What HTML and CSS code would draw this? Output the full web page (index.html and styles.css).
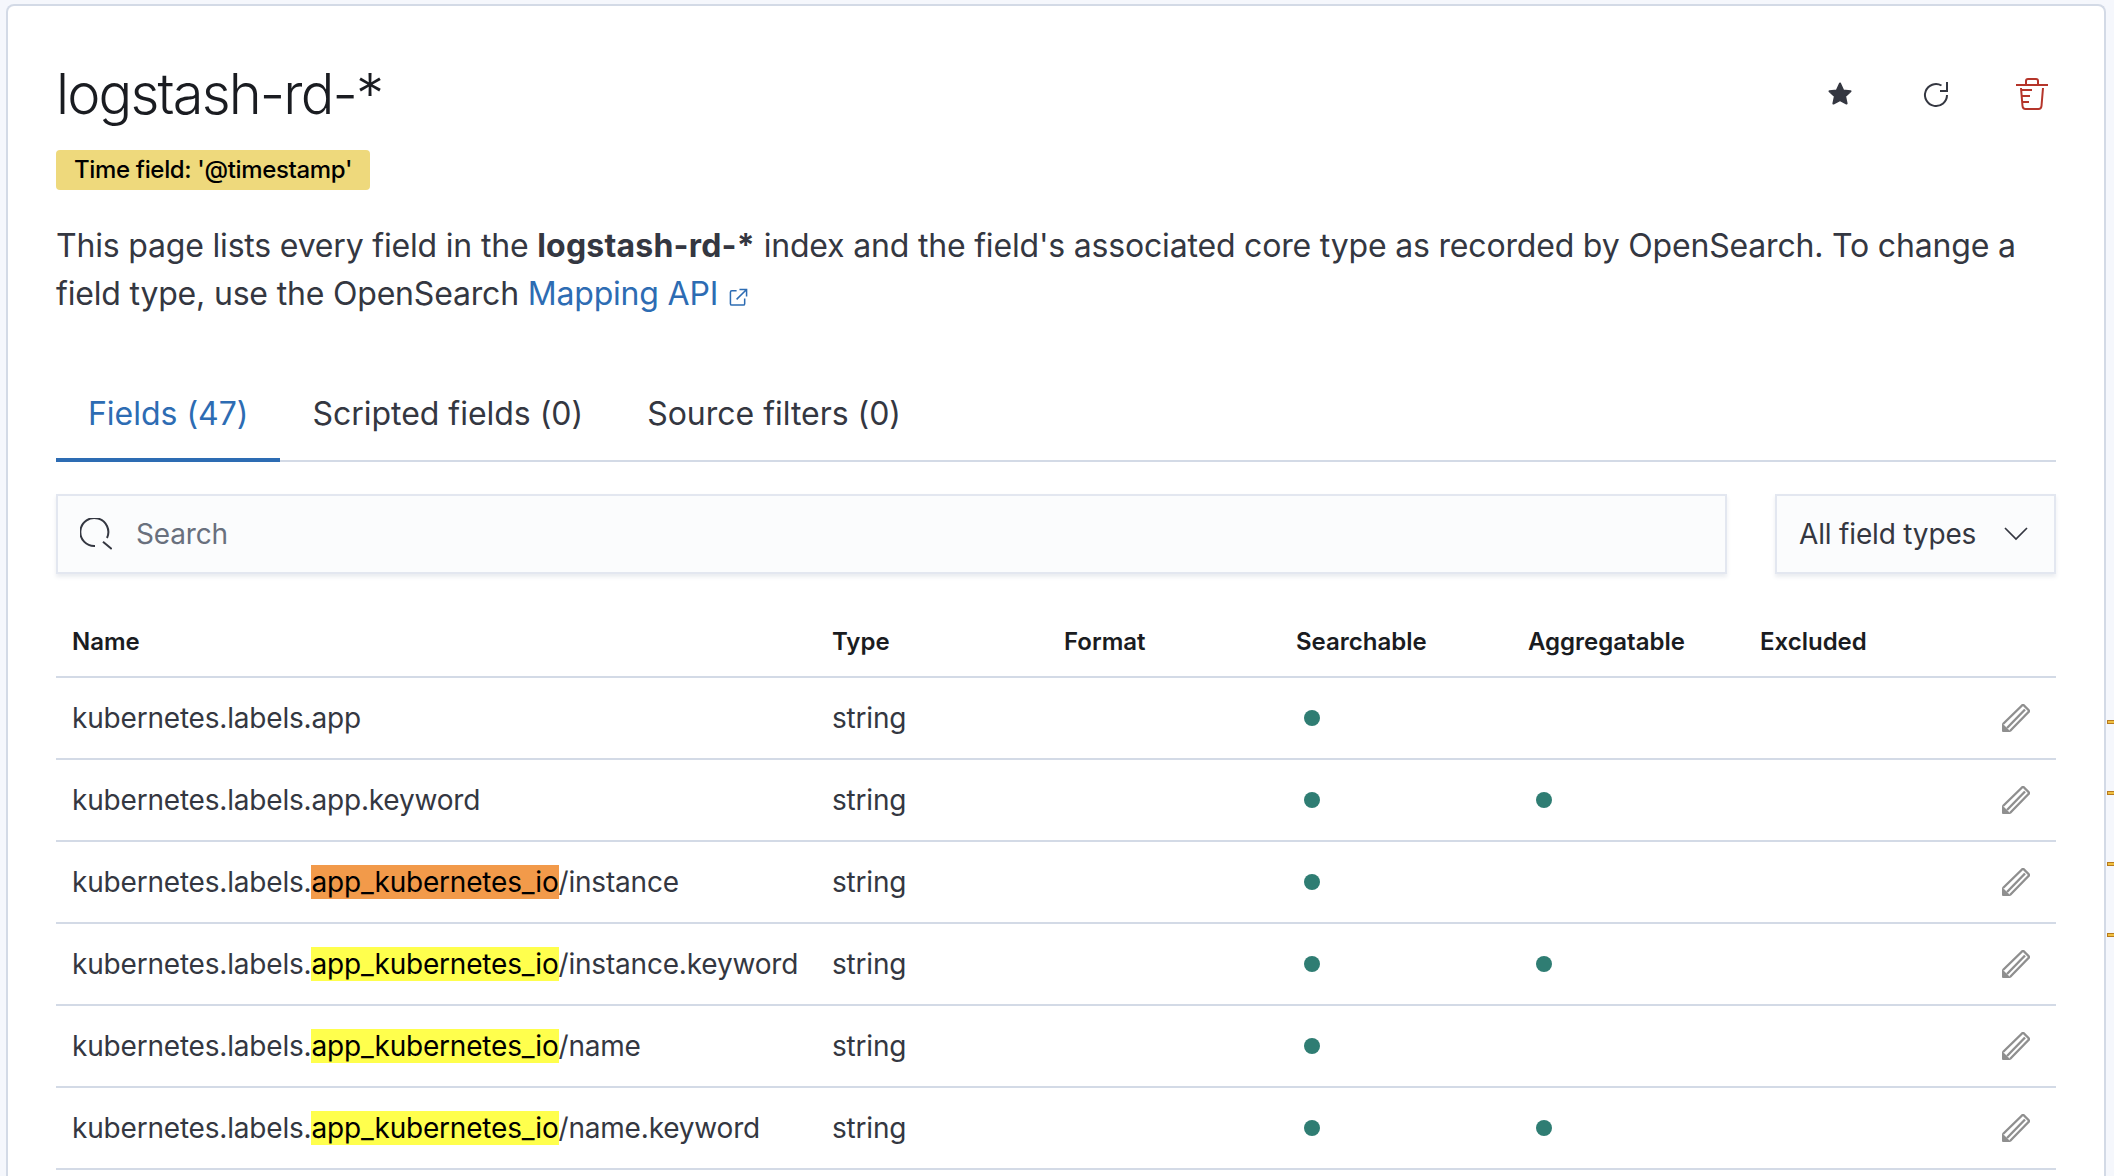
FILE: index.html
```html
<!DOCTYPE html>
<html lang="en">
<head>
    <meta charset="UTF-8">
    <title>logstash-rd-*</title>
    <link rel="stylesheet" href="styles.css">
</head>
<body>
    <div class="panel">
        <div class="page-head">
            <h1 class="page-title">logstash-rd-*</h1>
            <div class="head-actions">
                <svg class="head-icon" viewBox="-4 -4 32 32"><path fill="#343741" stroke="#343741" stroke-width="2" stroke-linejoin="round" d="M12 1.500l3.200 6.900 7.300.9-5.400 5 1.500 7.200L12 18l-6.600 3.500 1.500-7.200-5.400-5 7.300-.9z"/></svg>
                <svg class="head-icon" viewBox="-4 -4 32 32" fill="none" stroke="#343741" stroke-width="2"><path d="M17.500 3.500A11 11 0 1 0 23 13"/><path d="M23 0v9h-7"/></svg>
                <svg class="head-icon" viewBox="0 0 32 32" fill="none" stroke="#b5352a" stroke-width="2"><path d="M0 7h32"/><path d="M10 7V3q0-2 2-2h8q2 0 2 2v4"/><path d="M5 10l1.500 18q.3 3 3 3h13q2.700 0 3-3L27 10"/><path d="M5 12h11M6 18h8M7 24h6"/></svg>
            </div>
        </div>
        <span class="time-badge">Time field: '@timestamp'</span>
        <p class="intro">This page lists every field in the <strong>logstash-rd-*</strong> index and the field's associated core type as recorded by OpenSearch. To change a field type, use the OpenSearch <a class="intro-link" href="#">Mapping API <svg class="popout" viewBox="0 0 20 20" fill="none" stroke="#2d6cb3" stroke-width="1.600"><path d="M8 3H3q-1.500 0-1.500 1.500v12Q1.500 18 3 18h12q1.500 0 1.500-1.500V11"/><path d="M11 1.500h7.500V9M18.500 1.500L8 12"/></svg></a></p>

        <div class="tabs">
            <div class="tab tab-active">Fields (47)</div>
            <div class="tab">Scripted fields (0)</div>
            <div class="tab">Source filters (0)</div>
        </div>

        <div class="filters">
            <div class="search-box">
                <svg class="search-icon" viewBox="0 0 32 32" fill="none" stroke="#343741" stroke-width="2"><path d="M15 28A14 14 0 1 1 27 20"/><path d="M23 23.700l8.700 7.300"/></svg>
                <span class="search-text">Search</span>
            </div>
            <div class="type-select">
                <span>All field types</span>
                <svg class="chevron" viewBox="0 0 24 14" fill="none" stroke="#343741" stroke-width="1.700"><path d="M1 1l11 11L23 1"/></svg>
            </div>
        </div>

        <table class="fields-table">
            <thead>
                <tr>
                    <th class="col-name">Name</th>
                    <th class="col-std">Type</th>
                    <th class="col-std">Format</th>
                    <th class="col-std">Searchable</th>
                    <th class="col-std">Aggregatable</th>
                    <th class="col-std">Excluded</th>
                    <th class="col-edit"></th>
                </tr>
            </thead>
            <tbody>
                <tr>
                    <td>kubernetes.labels.app</td>
                    <td>string</td>
                    <td></td>
                    <td><span class="dot"></span></td>
                    <td></td>
                    <td></td>
                    <td class="edit-cell"><svg class="pencil" viewBox="0 0 28 28"><use href="#pencil-shape"/></svg></td>
                </tr>
                <tr>
                    <td>kubernetes.labels.app.keyword</td>
                    <td>string</td>
                    <td></td>
                    <td><span class="dot"></span></td>
                    <td><span class="dot"></span></td>
                    <td></td>
                    <td class="edit-cell"><svg class="pencil" viewBox="0 0 28 28"><use href="#pencil-shape"/></svg></td>
                </tr>
                <tr>
                    <td>kubernetes.labels.<mark class="hit hit-current">app_kubernetes_io</mark>/instance</td>
                    <td>string</td>
                    <td></td>
                    <td><span class="dot"></span></td>
                    <td></td>
                    <td></td>
                    <td class="edit-cell"><svg class="pencil" viewBox="0 0 28 28"><use href="#pencil-shape"/></svg></td>
                </tr>
                <tr>
                    <td>kubernetes.labels.<mark class="hit">app_kubernetes_io</mark>/instance.keyword</td>
                    <td>string</td>
                    <td></td>
                    <td><span class="dot"></span></td>
                    <td><span class="dot"></span></td>
                    <td></td>
                    <td class="edit-cell"><svg class="pencil" viewBox="0 0 28 28"><use href="#pencil-shape"/></svg></td>
                </tr>
                <tr>
                    <td>kubernetes.labels.<mark class="hit">app_kubernetes_io</mark>/name</td>
                    <td>string</td>
                    <td></td>
                    <td><span class="dot"></span></td>
                    <td></td>
                    <td></td>
                    <td class="edit-cell"><svg class="pencil" viewBox="0 0 28 28"><use href="#pencil-shape"/></svg></td>
                </tr>
                <tr>
                    <td>kubernetes.labels.<mark class="hit">app_kubernetes_io</mark>/name.keyword</td>
                    <td>string</td>
                    <td></td>
                    <td><span class="dot"></span></td>
                    <td><span class="dot"></span></td>
                    <td></td>
                    <td class="edit-cell"><svg class="pencil" viewBox="0 0 28 28"><use href="#pencil-shape"/></svg></td>
                </tr>
            </tbody>
        </table>
    </div>

    <!-- search hit markers on the scrollbar -->
    <span class="scroll-mark mark-1"></span>
    <span class="scroll-mark mark-2"></span>
    <span class="scroll-mark mark-3"></span>
    <span class="scroll-mark mark-4"></span>

    <svg class="defs" width="0" height="0">
        <symbol id="pencil-shape" viewBox="0 0 28 28">
            <g fill="none" stroke="#8f8f8f" stroke-width="2.400" stroke-linejoin="round">
                <path d="M1 20L20 1.500q1-1 2 0l4.500 4.500q1 1 0 2L8 27"/>
                <path d="M5 24L23 5.500"/>
            </g>
            <path fill="#8f8f8f" d="M0 19l9 9H1q-1 0-1-1z"/>
        </symbol>
    </svg>
</body>
</html>
```

FILE: styles.css
```css
html, body {
    margin: 0;
    height: 1176px;
    overflow: hidden;
}

body {
    font-family: Inter, "Liberation Sans", sans-serif;
    background-color: #f5f7fc;
    color: #343741;
    padding: 4px 8px 0 6px;
    box-sizing: border-box;
}

.panel {
    box-sizing: border-box;
    background-color: #fff;
    border: 2px solid #d3dae6;
    border-bottom: none;
    border-radius: 8px 8px 0 0;
    padding: 0 48px;
    height: 1172px;
}

.page-head {
    display: flex;
    justify-content: space-between;
    align-items: center;
    padding-top: 50px;
}

.page-title {
    margin: 0;
    font-size: 56px;
    font-weight: 300;
    line-height: 76px;
    color: #1a1c21;
    letter-spacing: -1.85px;
}

.head-actions {
    display: flex;
    align-items: center;
    gap: 64px;
    padding-right: 8px;
}

.head-icon {
    width: 32px;
    height: 32px;
}

.time-badge {
    display: inline-block;
    margin-top: 18px;
    padding: 0 18px;
    height: 40px;
    line-height: 40px;
    background-color: #eed97c;
    border-radius: 4px;
    color: #000;
    font-size: 24px;
    font-weight: 500;
    letter-spacing: -0.34px;
}

.intro {
    margin: 32px 0 0;
    font-size: 32px;
    line-height: 48px;
    letter-spacing: -0.185px;
}

.intro strong {
    font-weight: 700;
    letter-spacing: 0.2px;
}

.intro-link {
    color: #2d6cb3;
    text-decoration: none;
}

.popout {
    width: 19px;
    height: 19px;
    margin-left: 2px;
    vertical-align: -2px;
}

.tabs {
    display: flex;
    margin-top: 58px;
    border-bottom: 2px solid #d3dae6;
}

.tab {
    padding: 0 32px;
    height: 84px;
    line-height: 76px;
    font-size: 32px;
    letter-spacing: -0.02px;
    margin-bottom: -2px;
}

.tab-active {
    color: #2d6cb3;
    border-bottom: 4px solid #2d6cb3;
    height: 82px;
}

.filters {
    display: flex;
    justify-content: space-between;
    margin-top: 32px;
}

.search-box, .type-select {
    display: flex;
    align-items: center;
    box-sizing: border-box;
    height: 80px;
    background-color: #fbfcfd;
    border: 2px solid #e3e7f0;
    box-shadow: 0 3px 4px rgba(152, 162, 179, 0.2);
    font-size: 28px;
    letter-spacing: -0.17px;
}

.search-box {
    width: 1671px;
    padding-left: 22px;
}

.search-icon {
    width: 32px;
    height: 32px;
}

.search-text {
    margin-left: 24px;
    color: #69707d;
}

.type-select {
    width: 281px;
    padding: 0 26px 0 22px;
    justify-content: space-between;
}

.chevron {
    width: 24px;
    height: 14px;
}

.fields-table {
    width: 2000px;
    margin-top: 31px;
    border-collapse: collapse;
    table-layout: fixed;
    font-size: 28px;
    letter-spacing: -0.19px;
}

.fields-table th {
    box-sizing: border-box;
    height: 72px;
    padding: 2px 16px 0;
    text-align: left;
    font-size: 24px;
    font-weight: 600;
    letter-spacing: 0;
    color: #1a1c21;
    border-bottom: 2px solid #d3dae6;
}

.col-name { width: 760px; }
.col-std { width: 232px; }
.col-edit { width: 80px; }

.fields-table td {
    height: 80px;
    padding: 0 16px;
    border-bottom: 2px solid #d3dae6;
    white-space: nowrap;
}

.hit {
    background-color: #ffff4d;
    color: #000;
}

.hit-current {
    background-color: #f29a4a;
}

.dot {
    display: block;
    width: 16px;
    height: 16px;
    margin-left: 8px;
    border-radius: 50%;
    background-color: #2f7d73;
}

.pencil {
    display: block;
    width: 28px;
    height: 28px;
    margin-left: auto;
    margin-right: 10px;
}

.defs {
    position: absolute;
}

.scroll-mark {
    position: absolute;
    right: 0;
    box-sizing: border-box;
    width: 7px;
    height: 4px;
    background-color: #f0c040;
    border: 1px solid #b87a1e;
    border-right: none;
}

.mark-1 { top: 720px; }
.mark-2 { top: 791px; }
.mark-3 { top: 862px; }
.mark-4 { top: 933px; }
```
